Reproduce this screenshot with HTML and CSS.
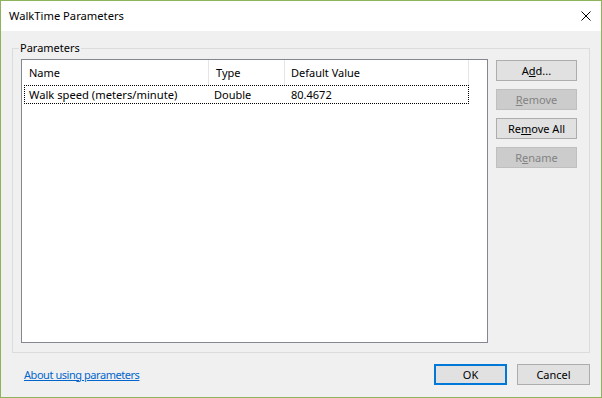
FILE: index.html
```html
<!DOCTYPE html>
<html>
<head>
<meta charset="utf-8">
<link rel="stylesheet" href="styles.css">
</head>
<body>
<div class="window">
  <div class="titlebar">
    <span class="title">WalkTime Parameters</span>
    <span class="close"><svg width="10" height="10" viewBox="0 0 10 10"><path d="M0.5 0.5L9.5 9.5M9.5 0.5L0.5 9.5" stroke="#000" stroke-width="1" fill="none"/></svg></span>
  </div>
  <div class="content">
    <div class="group">
      <span class="group-label">Parameters</span>
      <div class="list">
        <div class="header">
          <div class="hcell c-name">Name</div>
          <div class="hcell c-type">Type</div>
          <div class="hcell c-value">Default Value</div>
          <div class="hcell c-rest"></div>
        </div>
        <div class="row focused">
          <div class="cell c-name">Walk speed (meters/minute)</div>
          <div class="cell c-type">Double</div>
          <div class="cell c-value">80.4672</div>
        </div>
      </div>
      <div class="side-buttons">
        <button class="btn">A<u>d</u>d...</button>
        <button class="btn disabled"><u>R</u>emove</button>
        <button class="btn">Re<u>m</u>ove All</button>
        <button class="btn disabled">R<u>e</u>name</button>
      </div>
    </div>
    <div class="footer">
      <a class="link" href="#">About using parameters</a>
      <div class="footer-buttons">
        <button class="btn dlg default">OK</button>
        <button class="btn dlg">Cancel</button>
      </div>
    </div>
  </div>
</div>
</body>
</html>
```
FILE: styles.css
```css
* { box-sizing: border-box; }
html, body { margin: 0; padding: 0; }
body {
  font-family: "Noto Sans", "Open Sans", sans-serif;
  font-size: 11px;
  color: #000;
  background: #f0f0f0;
}
.window {
  width: 602px;
  height: 398px;
  border: 1px solid #8db35b;
  display: flex;
  flex-direction: column;
  background: #f0f0f0;
}
.titlebar {
  height: 30px;
  background: #fff;
  display: flex;
  align-items: center;
  justify-content: space-between;
  padding: 0 10px 1px 8px;
  flex: none;
}
.title { line-height: 16px; font-size: 11.2px; }
.close { display: flex; width: 10px; height: 10px; }
.close svg { display: block; }
.content {
  flex: 1;
  display: flex;
  flex-direction: column;
  padding: 17px 11px 0 11px;
}
.group {
  position: relative;
  height: 305px;
  border: 1px solid #dcdcdc;
  padding: 10px 12px 9px 8px;
  display: flex;
  gap: 8px;
}
.group-label {
  position: absolute;
  top: -9px;
  left: 6px;
  padding: 0 1px;
  line-height: 16px;
  background: #f0f0f0;
}
.list {
  width: 468px;
  height: 284px;
  border: 1px solid #828790;
  background: #fff;
  display: flex;
  flex-direction: column;
}
.header {
  display: flex;
  height: 25px;
  flex: none;
}
.hcell {
  border-right: 1px solid #e5e5e5;
  line-height: 25px;
  padding-left: 7px;
  white-space: nowrap;
}
.c-name { width: 187px; }
.c-type { width: 76px; }
.c-value { width: 184px; }
.hcell.c-value { padding-left: 6px; }
.c-rest { flex: 1; border-right: none; }
.row {
  display: flex;
  height: 19px;
  margin: 0 0 0 2px;
  width: 445px;
}
.row.focused { outline: 1px dotted #000; outline-offset: -1px; }
.cell { line-height: 19px; white-space: nowrap; padding-left: 5px; }
.row .c-name { width: 185px; font-size: 11.2px; }
.row .c-value { padding-left: 6px; }
.side-buttons {
  display: flex;
  flex-direction: column;
  gap: 8px;
  padding-top: 1px;
}
.btn {
  font: inherit;
  color: #000;
  width: 81px;
  height: 21px;
  background: #e1e1e1;
  border: 1px solid #adadad;
  padding: 0;
  margin: 0;
  line-height: 17px;
  text-align: center;
}
.btn.disabled {
  background: #cccccc;
  border-color: #bfbfbf;
  color: #838383;
}
.footer {
  display: flex;
  justify-content: space-between;
  align-items: center;
  padding: 11px 0 0 12px;
}
.link {
  color: #0066cc;
  text-decoration: underline;
  line-height: 16px;
  letter-spacing: -0.45px;
}
.footer-buttons { display: flex; gap: 10px; }
.btn.dlg { width: 73px; }
.btn.default { border: 2px solid #0078d7; line-height: 15px; }
```
